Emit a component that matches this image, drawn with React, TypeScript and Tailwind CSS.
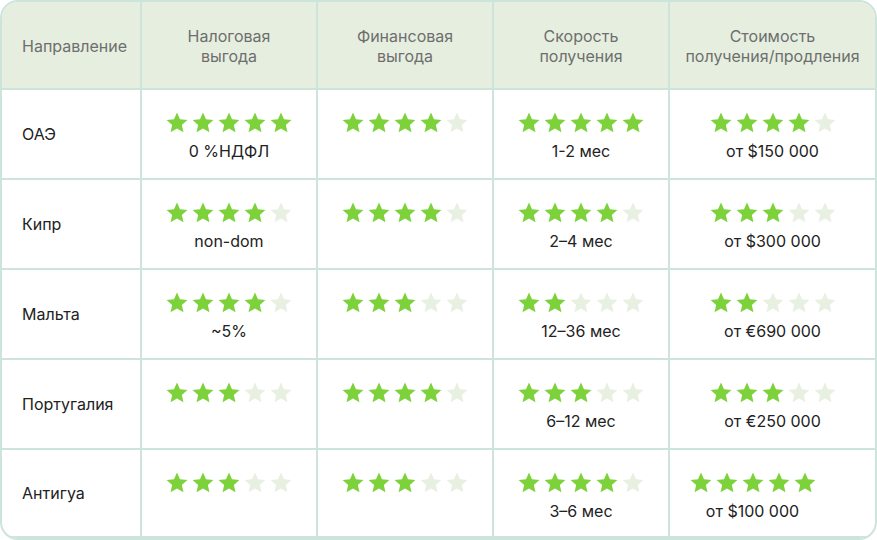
import { Fragment } from 'react'

type Row = {
  country: string
  tax: [number, string?]
  finance: [number, string?]
  speed: [number, string?]
  cost: [number, string?]
  shift?: boolean
}

const rows: Row[] = [
  { country: 'ОАЭ', tax: [5, '0 %НДФЛ'], finance: [4], speed: [5, '1-2 мес'], cost: [4, 'от $150 000'] },
  { country: 'Кипр', tax: [4, 'non-dom'], finance: [4], speed: [4, '2–4 мес'], cost: [3, 'от $300 000'] },
  { country: 'Мальта', tax: [4, '~5%'], finance: [3], speed: [2, '12–36 мес'], cost: [2, 'от €690 000'] },
  { country: 'Португалия', tax: [3], finance: [4], speed: [3, '6–12 мес'], cost: [3, 'от €250 000'] },
  { country: 'Антигуа', tax: [3], finance: [3], speed: [4, '3–6 мес'], cost: [5, 'от $100 000'], shift: true },
]

const headers: [string, string][] = [
  ['Налоговая', 'выгода'],
  ['Финансовая', 'выгода'],
  ['Скорость', 'получения'],
  ['Стоимость', 'получения/продления'],
]

function Star({ filled }: { filled: boolean }) {
  return (
    <svg width="22" height="21" viewBox="0 0 24 23">
      <path
        d="M12 0.6l3.3 7.4 8.1 0.8-6.1 5.4 1.8 7.9L12 18l-7.1 4.1 1.8-7.9L0.6 8.8l8.1-0.8z"
        fill={filled ? '#7dd23b' : '#e8f0e1'}
      />
    </svg>
  )
}

function Rating({ value, note, shift, last }: { value: number; note?: string; shift?: boolean; last: boolean }) {
  return (
    <div
      className={`flex flex-col items-center pt-[22px] border-b-2 border-[#cde4dc] ${last ? 'h-[88px] border-b-0' : 'h-[90px]'} ${shift ? 'pr-[40px]' : ''}`}
    >
      <div className="flex gap-[4px]">
        {[0, 1, 2, 3, 4].map((i) => (
          <Star key={i} filled={i < value} />
        ))}
      </div>
      {note && <div className="mt-[8px] text-[16px] leading-[20px] text-[#222]">{note}</div>}
    </div>
  )
}

export default function App() {
  return (
    <div
      className="w-[877px] h-[540px] bg-white"
      style={{ fontFamily: 'Inter, "Noto Sans", sans-serif' }}
    >
      <div className="border-2 border-[#cde4dc] rounded-[18px] overflow-hidden grid grid-cols-[140px_176px_176px_176px_1fr]">
        <div className="h-[88px] bg-[#e6efdf] border-b-2 border-r-2 border-[#cde4dc] flex items-center pl-[20px] pt-[2px] text-[16px] text-[#6e6e6e]">
          Направление
        </div>
        {headers.map((h, i) => (
          <div
            key={h[0]}
            className={`h-[88px] bg-[#e6efdf] border-b-2 border-[#cde4dc] flex items-center justify-center text-center text-[16px] leading-[20px] text-[#6e6e6e] pt-[2px] ${i < 3 ? 'border-r-2' : ''}`}
          >
            <span>
              {h[0]}
              <br />
              {h[1]}
            </span>
          </div>
        ))}
        {rows.map((r, idx) => {
          const last = idx === rows.length - 1
          const cells = [r.tax, r.finance, r.speed, r.cost]
          return (
            <Fragment key={r.country}>
              <div
                className={`border-r-2 border-b-2 border-[#cde4dc] flex items-center pl-[20px] text-[16px] text-[#222] ${last ? 'h-[88px] border-b-0' : 'h-[90px]'}`}
              >
                {r.country}
              </div>
              {cells.map((c, i) => (
                <div key={i} className={i < 3 ? 'border-r-2 border-[#cde4dc]' : ''}>
                  <Rating value={c[0]} note={c[1]} shift={r.shift && i === 3} last={last} />
                </div>
              ))}
            </Fragment>
          )
        })}
      </div>
    </div>
  )
}
